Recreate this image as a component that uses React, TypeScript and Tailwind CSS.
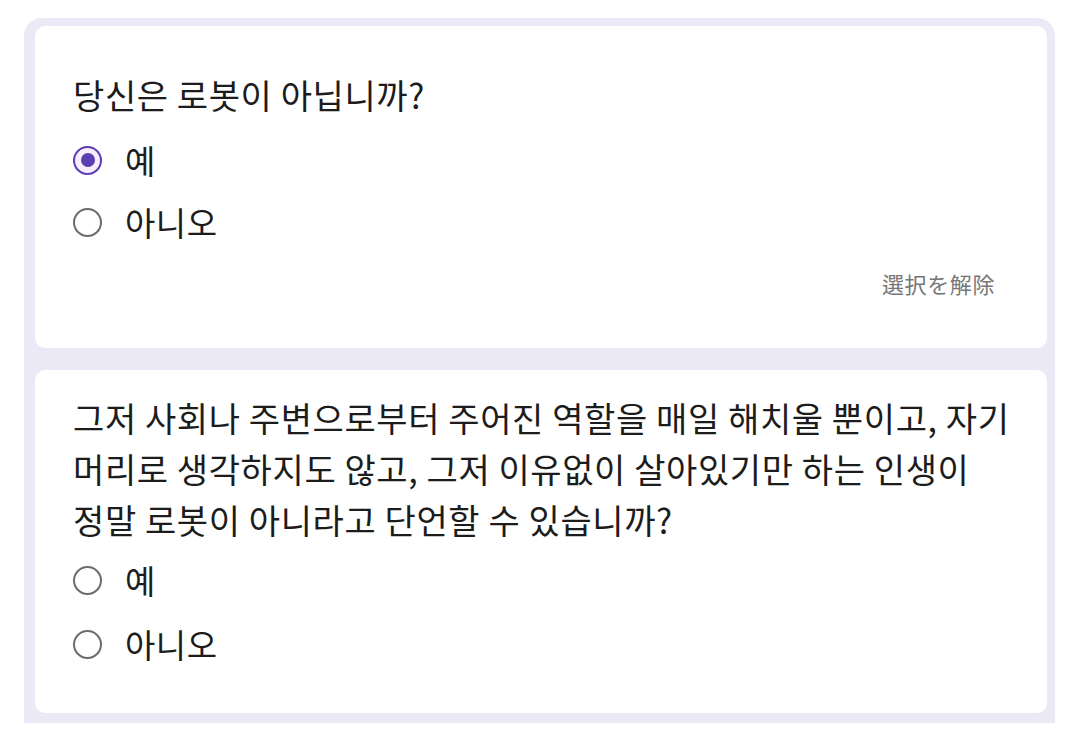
import React from 'react';

const font = { fontFamily: '"Noto Sans CJK KR", "Noto Sans", sans-serif' };

const Radio: React.FC<{ checked?: boolean }> = ({ checked }) =>
  checked ? (
    <span className="flex h-[29px] w-[29px] items-center justify-center rounded-full border-[2.5px] border-[#5e3fb0] bg-[#f6eefa]">
      <span className="h-[14px] w-[14px] rounded-full bg-[#5a3eb2]" />
    </span>
  ) : (
    <span className="h-[29px] w-[29px] rounded-full border-[2px] border-[#6b6b6b] bg-white" />
  );

const Option: React.FC<{ label: string; checked?: boolean; h: string }> = ({ label, checked, h }) => (
  <div className={`flex items-center ${h}`}>
    <div className="flex w-[52px] justify-start">
      <Radio checked={checked} />
    </div>
    <span className="text-[33px] leading-none tracking-[0.5px] text-[#1c1c1c]">{label}</span>
  </div>
);

export default function App() {
  return (
    <div className="min-h-screen bg-white pl-[24px] pr-[25px] pt-[18px]" style={font}>
      <div className="rounded-t-[18px] bg-[#ebe9f5] pb-[10px] pl-[11px] pr-[8px] pt-[8px]">
        <div className="h-[322px] rounded-[10px] bg-white pl-[38px] pr-[52px] pt-[47px]">
          <p className="text-[34px] leading-[44px] tracking-[0.6px] text-[#1c1c1c]">당신은 로봇이 아닙니까?</p>
          <div className="mt-[12px]">
            <Option label="예" checked h="h-[62px]" />
            <Option label="아니오" h="h-[62px]" />
          </div>
          <div className="mt-[18px] flex justify-end">
            <span className="text-[22px] leading-[24px] tracking-[0.6px] text-[#777777]">選択を解除</span>
          </div>
        </div>
        <div className="mt-[22px] h-[343px] rounded-[10px] bg-white pl-[38px] pr-[10px] pt-[22px]">
          <p className="whitespace-nowrap text-[34px] leading-[51px] tracking-[0.6px] text-[#1c1c1c]">
            그저 사회나 주변으로부터 주어진 역할을 매일 해치울 뿐이고, 자기
            <br />
            머리로 생각하지도 않고, 그저 이유없이 살아있기만 하는 인생이
            <br />
            정말 로봇이 아니라고 단언할 수 있습니까?
          </p>
          <div className="mt-[3px]">
            <Option label="예" h="h-[64px]" />
            <Option label="아니오" h="h-[64px]" />
          </div>
        </div>
      </div>
    </div>
  );
}
